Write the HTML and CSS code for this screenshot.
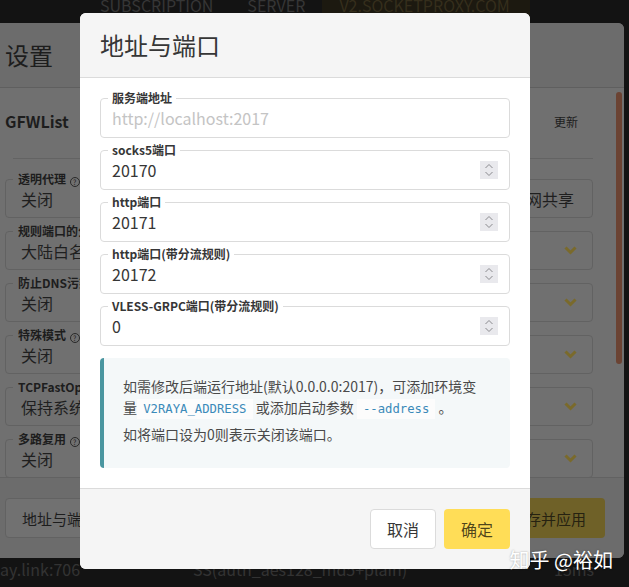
FILE: index.html
```html
<!DOCTYPE html>
<html lang="zh-CN">
<head>
<meta charset="utf-8">
<title>地址与端口</title>
<link rel="stylesheet" href="styles.css">
</head>
<body>
<nav class="topnav">
  <span class="tab">SUBSCRIPTION</span>
  <span class="tab">SERVER</span>
  <span class="tab tab-active">V2.SOCKETPROXY.COM</span>
</nav>

<section class="settings">
  <header class="settings-head"><h2 class="settings-title">设置</h2></header>
  <div class="settings-body">
    <div class="gfw-row"><strong class="gfw-name">GFWList</strong><span class="update">更新</span></div>
    <hr class="divider">
    <div class="settings-grid">
      <div class="sfield"><span class="slabel">透明代理 <i class="help">?</i></span><div class="sbox">关闭</div></div>
      <div class="sfield"><div class="sbox sbox-right">局域网共享</div></div>

      <div class="sfield"><span class="slabel">规则端口的分流模式</span><div class="sbox">大陆白名单</div></div>
      <div class="sfield"><span class="slabel">DNS请求</span><div class="sbox">默认<svg class="chev" width="13" height="9" viewBox="0 0 13 9"><polyline points="1.5,1.5 6.5,6.5 11.5,1.5"/></svg></div></div>

      <div class="sfield"><span class="slabel">防止DNS污染</span><div class="sbox">关闭</div></div>
      <div class="sfield"><span class="slabel">自动更新GFWList</span><div class="sbox">关闭<svg class="chev" width="13" height="9" viewBox="0 0 13 9"><polyline points="1.5,1.5 6.5,6.5 11.5,1.5"/></svg></div></div>

      <div class="sfield"><span class="slabel">特殊模式 <i class="help">?</i></span><div class="sbox">关闭</div></div>
      <div class="sfield"><span class="slabel">自动更新订阅</span><div class="sbox">关闭<svg class="chev" width="13" height="9" viewBox="0 0 13 9"><polyline points="1.5,1.5 6.5,6.5 11.5,1.5"/></svg></div></div>

      <div class="sfield"><span class="slabel">TCPFastOpen</span><div class="sbox">保持系统默认</div></div>
      <div class="sfield"><span class="slabel">解析订阅链接</span><div class="sbox">直连<svg class="chev" width="13" height="9" viewBox="0 0 13 9"><polyline points="1.5,1.5 6.5,6.5 11.5,1.5"/></svg></div></div>

      <div class="sfield"><span class="slabel">多路复用 <i class="help">?</i></span><div class="sbox">关闭</div></div>
      <div class="sfield"><span class="slabel">测速</span><div class="sbox">默认<svg class="chev" width="13" height="9" viewBox="0 0 13 9"><polyline points="1.5,1.5 6.5,6.5 11.5,1.5"/></svg></div></div>
    </div>
  </div>
  <div class="scrollbar"></div>
  <footer class="settings-foot">
    <button class="sbtn">地址与端口</button>
    <button class="sbtn sbtn-primary">保存并应用</button>
  </footer>
</section>

<div class="table-row">
  <span>ay.link:706</span>
  <span>SS(auth_aes128_md5+plain)</span>
  <span>15ms</span>
</div>

<div class="modal-card">
  <header class="modal-head"><h1 class="modal-title">地址与端口</h1></header>
  <div class="modal-body">
    <div class="field">
      <label class="field-label">服务端地址</label>
      <div class="control"><input class="input" type="text" placeholder="http://localhost:2017"></div>
    </div>
    <div class="field">
      <label class="field-label">socks5端口</label>
      <div class="control"><input class="input" type="text" value="20170">
        <span class="spin"><svg width="18" height="18" viewBox="0 0 18 18"><polyline points="5.5,7 9,3.5 12.5,7"/><polyline points="5.5,11 9,14.5 12.5,11"/></svg></span></div>
    </div>
    <div class="field">
      <label class="field-label">http端口</label>
      <div class="control"><input class="input" type="text" value="20171">
        <span class="spin"><svg width="18" height="18" viewBox="0 0 18 18"><polyline points="5.5,7 9,3.5 12.5,7"/><polyline points="5.5,11 9,14.5 12.5,11"/></svg></span></div>
    </div>
    <div class="field">
      <label class="field-label">http端口(带分流规则)</label>
      <div class="control"><input class="input" type="text" value="20172">
        <span class="spin"><svg width="18" height="18" viewBox="0 0 18 18"><polyline points="5.5,7 9,3.5 12.5,7"/><polyline points="5.5,11 9,14.5 12.5,11"/></svg></span></div>
    </div>
    <div class="field">
      <label class="field-label">VLESS-GRPC端口(带分流规则)</label>
      <div class="control"><input class="input" type="text" value="0">
        <span class="spin"><svg width="18" height="18" viewBox="0 0 18 18"><polyline points="5.5,7 9,3.5 12.5,7"/><polyline points="5.5,11 9,14.5 12.5,11"/></svg></span></div>
    </div>
    <div class="message">
      <p>如需修改后端运行地址(默认0.0.0.0:2017)，可添加环境变量<code>V2RAYA_ADDRESS</code> 或添加启动参数 <code>--address</code> 。</p>
      <p>如将端口设为0则表示关闭该端口。</p>
    </div>
  </div>
  <footer class="modal-foot">
    <button class="btn">取消</button>
    <button class="btn btn-primary">确定</button>
  </footer>
</div>

<div class="watermark">知乎 @裕如</div>
</body>
</html>
```
FILE: styles.css
```css
* { box-sizing: border-box; }

html, body { margin: 0; padding: 0; }

body {
  position: relative;
  width: 629px;
  height: 587px;
  overflow: hidden;
  background: #131313;
  font-family: "Noto Sans CJK SC", "Noto Sans", sans-serif;
}

/* ---------- top navigation (behind everything) ---------- */
.topnav {
  display: flex;
  align-items: flex-start;
  height: 23px;
  padding-left: 83px;
  overflow: hidden;
}
.tab {
  height: 26px;
  margin-top: -3px;
  padding: 0 17px;
  font-size: 16px;
  line-height: 16px;
  color: #363636;
  white-space: nowrap;
}
.tab-active {
  width: 208px;
  background: #1c1910;
  color: #352e1c;
}

/* ---------- settings panel (dimmed) ---------- */
.settings {
  position: relative;
  display: flex;
  flex-direction: column;
  width: 639px;
  height: 535px;
  margin-left: -15px;
  background: #707070;
  border-radius: 6px;
  overflow: hidden;
}
.settings-head {
  padding: 20px;
  background: #6c6c6c;
  border-bottom: 1px solid #5f5f5f;
}
.settings-title {
  margin: 0;
  font-size: 24px;
  line-height: 1;
  font-weight: 400;
  color: #1d1d1d;
}
.settings-body {
  height: 389px;
  overflow: hidden;
  padding: 20px 31px 0 20px;
}
.gfw-row {
  display: flex;
  justify-content: space-between;
  align-items: center;
  height: 26px;
  margin-bottom: 24px;
}
.gfw-name {
  font-size: 16px;
  font-weight: 700;
  color: #1d1d1d;
}
.update {
  padding-right: 15px;
  font-size: 12px;
  color: #1d1d1d;
}
.divider {
  height: 1px;
  margin: 0 0 20px 8px;
  border: 0;
  background: #636363;
}
.settings-grid {
  display: grid;
  grid-template-columns: 1fr 1fr;
  column-gap: 24px;
  row-gap: 13px;
}
.sfield { position: relative; }
.slabel {
  position: absolute;
  left: 8px;
  top: -8px;
  padding: 0 5px;
  background: #707070;
  font-size: 12px;
  line-height: 15px;
  font-weight: 700;
  color: #1d1d1d;
  white-space: nowrap;
}
.help {
  display: inline-block;
  width: 10px;
  height: 10px;
  margin-left: 1px;
  border: 1px solid #2a2a2a;
  border-radius: 50%;
  font-style: normal;
  font-weight: 400;
  font-size: 7px;
  line-height: 8px;
  text-align: center;
  vertical-align: -1px;
}
.sbox {
  display: flex;
  align-items: center;
  height: 39px;
  padding: 0 15px;
  border: 1px solid #626262;
  border-radius: 4px;
  font-size: 16px;
  color: #1f1f1f;
  white-space: nowrap;
}
.sbox-right { justify-content: flex-end; padding-right: 18px; }
.chev { margin-left: auto; }
.chev polyline { fill: none; stroke: #7a6a2b; stroke-width: 3; }

.scrollbar {
  position: absolute;
  right: 2px;
  top: 69px;
  width: 6px;
  height: 272px;
  border-radius: 3px;
  background: #6b4333;
}
.settings-foot {
  display: flex;
  justify-content: space-between;
  padding: 20px 19px 20px 20px;
  background: #6c6c6c;
  border-top: 1px solid #626262;
}
.sbtn {
  height: 40px;
  padding: 0 16px;
  border: 1px solid #626262;
  border-radius: 4px;
  background: #717171;
  font-family: inherit;
  font-size: 15px;
  color: #1d1d1d;
}
.sbtn-primary {
  padding: 0 18px;
  border-color: transparent;
  background: #6f6128;
  color: #262211;
}

/* ---------- table row under the panel ---------- */
.table-row {
  display: grid;
  grid-template-columns: 193px 361px auto;
  height: 29px;
  font-size: 16px;
  line-height: 22px;
  color: #333333;
  white-space: nowrap;
}

/* ---------- modal ---------- */
.modal-card {
  position: absolute;
  left: 80px;
  top: 13px;
  width: 450px;
  background: #fff;
  border-radius: 6px;
  overflow: hidden;
}
.modal-head {
  padding: 20px;
  background: #f5f5f5;
  border-bottom: 1px solid #dbdbdb;
}
.modal-title {
  margin: 0;
  font-size: 24px;
  line-height: 1;
  font-weight: 400;
  color: #363636;
}
.modal-body {
  display: flex;
  flex-direction: column;
  gap: 12px;
  padding: 20px;
}
.field { position: relative; }
.field-label {
  position: absolute;
  z-index: 1;
  left: 8px;
  top: -7px;
  padding: 0 4px;
  background: #fff;
  font-size: 12px;
  line-height: 14px;
  font-weight: 700;
  color: #363636;
}
.control { position: relative; }
.input {
  display: block;
  width: 100%;
  height: 40px;
  padding: 0 11px;
  border: 1px solid #dbdbdb;
  border-radius: 4px;
  background: #fff;
  font-family: inherit;
  font-size: 16px;
  color: #363636;
  outline: none;
}
.input::placeholder { color: #c4c4c4; }
.spin {
  position: absolute;
  right: 12px;
  top: 11px;
  width: 18px;
  height: 18px;
  background: #e9e9ed;
}
.spin svg { display: block; }
.spin polyline { fill: none; stroke: #8a8a8e; stroke-width: 1; }

.message {
  padding: 18px 25px 23px 19px;
  border-left: 4px solid #4a96a0;
  border-radius: 4px;
  background: #f4f8f9;
  font-size: 14px;
  line-height: 21px;
  color: #4a4a4a;
}
.message p { margin: 0 0 6px; }
.message p:last-child { margin-bottom: 0; }
.message code {
  padding: 0.25em 0.5em;
  background: #fcfcfc;
  font-family: "DejaVu Sans Mono", monospace;
  font-size: 0.875em;
  line-height: 1;
  color: #3b8ab9;
}

.modal-foot {
  display: flex;
  justify-content: flex-end;
  gap: 8px;
  padding: 20px;
  background: #f5f5f5;
  border-top: 1px solid #dbdbdb;
}
.btn {
  height: 40px;
  padding: 0 16px;
  border: 1px solid #dbdbdb;
  border-radius: 4px;
  background: #fff;
  font-family: inherit;
  font-size: 16px;
  color: #363636;
}
.btn-primary {
  border-color: transparent;
  background: #ffdd57;
  color: rgba(0, 0, 0, 0.7);
}

/* ---------- watermark ---------- */
.watermark {
  position: absolute;
  right: 16px;
  top: 548px;
  font-size: 20px;
  line-height: 24px;
  color: #fff;
  text-shadow: 0 0 2px rgba(0, 0, 0, 0.35);
  white-space: nowrap;
}
```
